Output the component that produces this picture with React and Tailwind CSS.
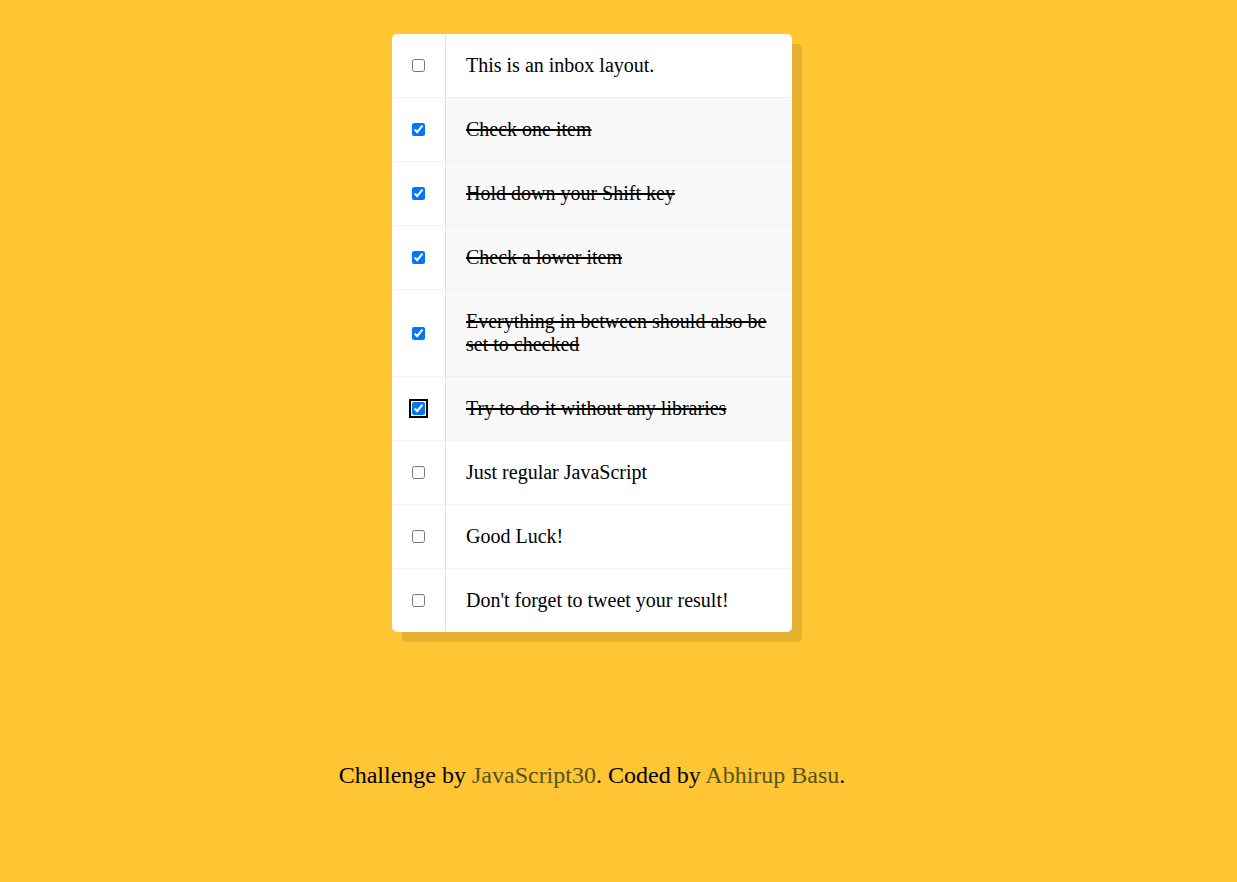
import { useState } from "react";

const initialItems = [
  { text: "This is an inbox layout.", done: false },
  { text: "Check one item", done: true },
  { text: "Hold down your Shift key", done: true },
  { text: "Check a lower item", done: true },
  { text: "Everything in between should also be set to checked", done: true },
  { text: "Try to do it without any libraries", done: true, focused: true },
  { text: "Just regular JavaScript", done: false },
  { text: "Good Luck!", done: false },
  { text: "Don't forget to tweet your result!", done: false },
];

export default function App() {
  const [items, setItems] = useState(initialItems);
  const [lastIndex, setLastIndex] = useState(null);

  // shift-click checks everything between the last box and this one
  const handleCheck = (index, e) => {
    const checked = e.target.checked;
    setItems((prev) =>
      prev.map((item, i) => {
        if (i === index) return { ...item, done: checked };
        if (e.nativeEvent.shiftKey && checked && lastIndex !== null) {
          const lo = Math.min(lastIndex, index);
          const hi = Math.max(lastIndex, index);
          if (i > lo && i < hi) return { ...item, done: true };
        }
        return item;
      })
    );
    setLastIndex(index);
  };

  return (
    <div className="min-h-[882px] bg-[#ffc533] font-['Liberation_Serif',serif] text-black">
      <div className="w-[1184px] flex flex-col items-center pt-[34px]">
        {/* Inbox */}
        <div className="w-[400px] bg-white rounded-[5px] shadow-[10px_10px_0_rgba(0,0,0,0.1)]">
          {items.map((item, i) => (
            <div
              key={i}
              className={`flex items-center ${i < items.length - 1 ? "border-b border-[#f1f1f1]" : ""}`}
            >
              <input
                type="checkbox"
                checked={item.done}
                onChange={(e) => handleCheck(i, e)}
                className={`m-5 w-[13px] h-[13px] shrink-0 accent-[#0075ff] ${
                  item.focused ? "rounded-[2px] shadow-[0_0_0_1px_white,0_0_0_3px_black]" : ""
                }`}
              />
              <p
                className={`flex-1 self-stretch p-5 text-[20px] leading-[23px] border-l border-[#d1e2ff] ${
                  item.done ? "bg-[#f9f9f9] line-through" : ""
                }`}
              >
                {item.text}
              </p>
            </div>
          ))}
        </div>

        {/* Footer */}
        <p className="mt-[129px] text-[24px] leading-[28px]">
          Challenge by <a href="#" className="text-[#57541a]">JavaScript30</a>. Coded by{" "}
          <a href="#" className="text-[#57541a]">Abhirup Basu</a>.
        </p>
      </div>
    </div>
  );
}
